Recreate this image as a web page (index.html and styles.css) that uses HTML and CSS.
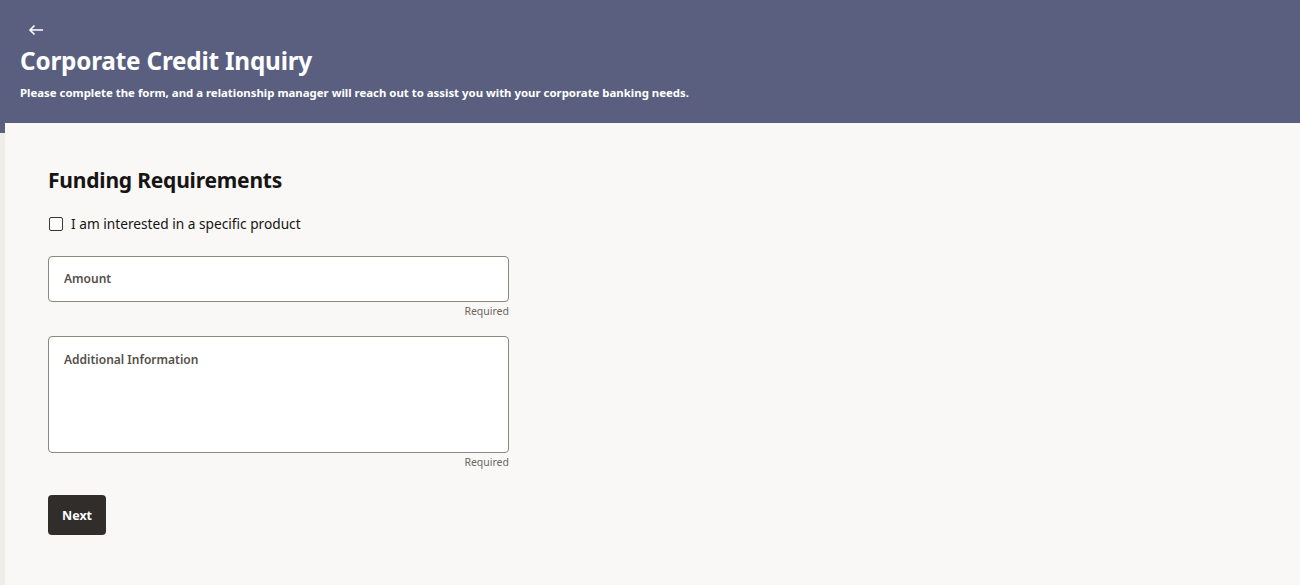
FILE: index.html
```html
<!DOCTYPE html>
<html lang="en">
<head>
<meta charset="UTF-8">
<meta name="viewport" content="width=device-width, initial-scale=1.0">
<title>Corporate Credit Inquiry</title>
<link rel="stylesheet" href="styles.css">
</head>
<body>

<header class="page-header">
  <button class="back-btn" aria-label="Back">
    <svg width="16" height="12" viewBox="0 0 16 12" fill="none" stroke="#ffffff" stroke-width="1.6">
      <path d="M15 6H2M6.5 1.5L2 6l4.5 4.5"/>
    </svg>
  </button>
  <h1>Corporate Credit Inquiry</h1>
  <p class="subtitle">Please complete the form, and a relationship manager will reach out to assist you with your corporate banking needs.</p>
</header>

<div class="page-body">
  <main class="form-panel">
    <h2>Funding Requirements</h2>

    <label class="check-row">
      <input type="checkbox">
      <span>I am interested in a specific product</span>
    </label>

    <div class="field">
      <div class="field-box">
        <label class="field-label" for="amount">Amount</label>
        <input id="amount" type="text">
      </div>
      <div class="field-hint">Required</div>
    </div>

    <div class="field">
      <div class="field-box tall">
        <label class="field-label" for="info">Additional Information</label>
        <textarea id="info"></textarea>
      </div>
      <div class="field-hint">Required</div>
    </div>

    <button class="btn">Next</button>
  </main>
</div>

</body>
</html>
```

FILE: styles.css
```css
* {
  box-sizing: border-box;
}
body {
  margin: 0;
  font-family: "Noto Sans", "Open Sans", Arial, sans-serif;
  color: #161513;
  background: #efedea;
  height: 585px;
  overflow: hidden;
}
.page-header {
  background: #5a5f80;
  color: #ffffff;
  height: 123px;
  padding: 20px 20px 0;
}
.back-btn {
  background: none;
  border: none;
  padding: 0;
  margin: 0 0 0 8px;
  height: 20px;
  display: flex;
  align-items: center;
  cursor: pointer;
}
h1 {
  font-size: 24.3px;
  font-weight: 700;
  margin: 4px 0 0;
  line-height: 34px;
  letter-spacing: -0.2px;
}
.subtitle {
  font-size: 11.4px;
  font-weight: 700;
  margin: 7px 0 0;
  line-height: 16px;
}
.page-body {
  padding-left: 5px;
  background: linear-gradient(#5a5f80, #5a5f80) no-repeat 0 0 / 5px 10px;
}
.form-panel {
  background: #f9f8f6;
  height: 462px;
  padding: 39px 43px;
}
h2 {
  font-size: 21px;
  font-weight: 700;
  margin: 3px 0 0;
  line-height: 30px;
  letter-spacing: -0.2px;
}
.check-row {
  display: flex;
  align-items: center;
  gap: 8px;
  margin-top: 19px;
  font-size: 13.7px;
  color: #161513;
}
.check-row input {
  appearance: none;
  width: 14px;
  height: 14px;
  margin: 0 0 0 1px;
  border: 1.5px solid #3a3632;
  border-radius: 2px;
  background: #ffffff;
}
.field {
  width: 461px;
  margin-top: 23px;
}
.field + .field {
  margin-top: 18px;
}
.field-box {
  background: #ffffff;
  border: 1px solid #8b8783;
  border-radius: 4px;
  height: 46px;
  padding: 14px 15px 0;
}
.field-box.tall {
  height: 117px;
  padding-top: 15px;
}
.field-label {
  display: block;
  font-size: 12px;
  font-weight: 600;
  color: #55504b;
  line-height: 16px;
}
.field-box input,
.field-box textarea {
  display: none;
}
.field-hint {
  text-align: right;
  font-size: 10.5px;
  color: #6b6661;
  margin-top: 2px;
  line-height: 14px;
}
.btn {
  margin-top: 26px;
  background: #312d2a;
  color: #ffffff;
  font-family: inherit;
  font-size: 12.5px;
  font-weight: 700;
  border: none;
  border-radius: 4px;
  height: 40px;
  padding: 0 14px;
  cursor: pointer;
}
```
